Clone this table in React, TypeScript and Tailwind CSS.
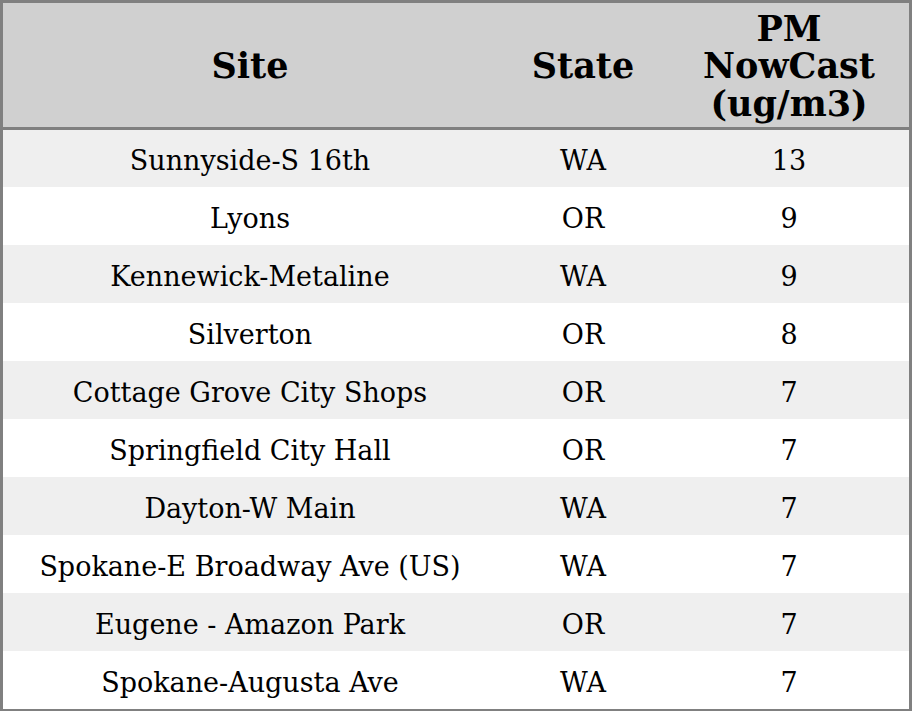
const rows = [
  { site: "Sunnyside-S 16th", state: "WA", value: 13 },
  { site: "Lyons", state: "OR", value: 9 },
  { site: "Kennewick-Metaline", state: "WA", value: 9 },
  { site: "Silverton", state: "OR", value: 8 },
  { site: "Cottage Grove City Shops", state: "OR", value: 7 },
  { site: "Springfield City Hall", state: "OR", value: 7 },
  { site: "Dayton-W Main", state: "WA", value: 7 },
  { site: "Spokane-E Broadway Ave (US)", state: "WA", value: 7 },
  { site: "Eugene - Amazon Park", state: "OR", value: 7 },
  { site: "Spokane-Augusta Ave", state: "WA", value: 7 },
];

const App = () => {
  return (
    <div className="h-[711px] w-[912px] overflow-hidden bg-white font-['DejaVu_Serif',serif] text-black">
      <div className="border-[3px] border-[#808080]">
        <table className="w-full table-fixed border-collapse">
          <colgroup>
            <col className="w-[494px]" />
            <col className="w-[172px]" />
            <col className="w-[240px]" />
          </colgroup>
          <thead>
            <tr className="h-[125px] border-b-[3px] border-[#808080] bg-[#d0d0d0] text-[35px] font-bold leading-[37.5px]">
              <th className="pt-[2px] text-center">Site</th>
              <th className="pt-[2px] text-center">State</th>
              <th className="pt-[2px] text-center">
                PM
                <br />
                NowCast
                <br />
                (ug/m3)
              </th>
            </tr>
          </thead>
          <tbody className="text-[27px] leading-[32px]">
            {rows.map((row, i) => (
              <tr
                key={row.site}
                className={`${i === 0 ? "h-[59px]" : "h-[58px]"} ${
                  i % 2 === 0 ? "bg-[#efefef]" : "bg-white"
                }`}
              >
                <td className="pt-[6px] text-center">{row.site}</td>
                <td className="pt-[6px] text-center">{row.state}</td>
                <td className="pt-[6px] text-center">{row.value}</td>
              </tr>
            ))}
          </tbody>
        </table>
      </div>
    </div>
  );
};

export default App;
